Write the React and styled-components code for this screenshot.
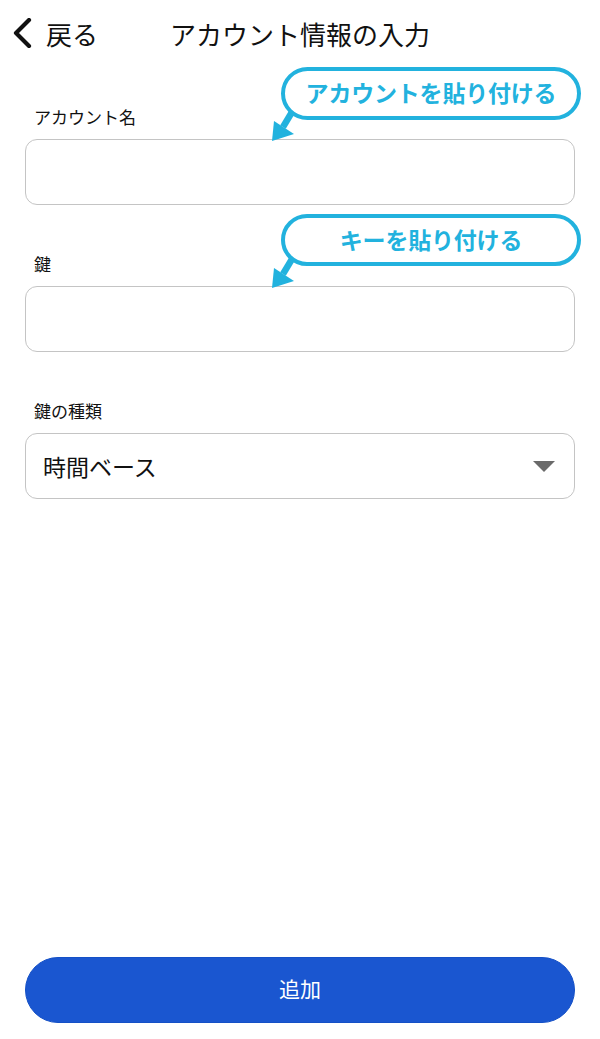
import React from 'react'
import styled, { createGlobalStyle } from 'styled-components'

const GlobalStyle = createGlobalStyle`
    html, body {
        margin: 0;
        padding: 0;
        background: #ffffff;
    }
    body {
        font-family: "Noto Sans CJK JP", "Noto Sans", sans-serif;
        color: #111111;
    }
`

const Page = styled.div`
    min-height: 100vh;
    display: flex;
    flex-direction: column;
    box-sizing: border-box;
    padding-bottom: 16px;
`

const Header = styled.header`
    height: 66px;
    display: grid;
    grid-template-columns: 1fr auto 1fr;
    align-items: center;
`

const BackButton = styled.button`
    display: flex;
    align-items: center;
    gap: 13px;
    padding: 0 0 0 13px;
    border: none;
    background: none;
    font-family: inherit;
    font-size: 26px;
    color: #111111;
    justify-self: start;
    cursor: pointer;
`

const Title = styled.h1`
    margin: 0;
    font-size: 26px;
    font-weight: 400;
    color: #111111;
`

const Form = styled.div`
    display: flex;
    flex-direction: column;
    gap: 50px;
    padding: 42px 25px 0;
`

const Field = styled.div`
    position: relative;
    display: flex;
    flex-direction: column;
    gap: 13px;
`

const Label = styled.label`
    font-size: 17px;
    line-height: 18px;
    padding-left: 9px;
    color: #111111;
`

const Box = styled.div`
    height: 66px;
    box-sizing: border-box;
    border: 1.6px solid #c4c4c4;
    border-radius: 12px;
    background: #ffffff;
    display: flex;
    align-items: center;
    justify-content: space-between;
    padding: 0 19px 0 17px;
    font-size: 23px;
    color: #111111;
`

const Caret = styled.span`
    width: 0;
    height: 0;
    border-left: 11px solid transparent;
    border-right: 11px solid transparent;
    border-top: 11px solid #6a6a6a;
`

const Callout = styled.div`
    position: absolute;
    top: -41px;
    left: 256px;
    width: 300px;
`

const Bubble = styled.div`
    position: relative;
    z-index: 1;
    height: ${p => p.h}px;
    box-sizing: border-box;
    border: 4px solid #22b2de;
    border-radius: 28px;
    background: #ffffff;
    display: flex;
    align-items: center;
    justify-content: center;
    padding-bottom: 3px;
    font-size: 23px;
    font-weight: 700;
    color: #22b2de;
    letter-spacing: -0.2px;
`

const Pointer = styled.svg`
    position: absolute;
    left: -14px;
    top: 38px;
    width: 40px;
    height: 40px;
    overflow: visible;
`

const AddButton = styled.button`
    margin: auto 25px 0;
    height: 66px;
    padding: 0 0 4px;
    border: 1px solid #1450c6;
    border-radius: 33px;
    background: #1a56d0;
    color: #ffffff;
    font-family: inherit;
    font-size: 21px;
    cursor: pointer;
`

const Chevron = () => (
    <svg width="20" height="30" viewBox="0 0 20 30">
        <path d="M16 2 L3 15 L16 28" fill="none" stroke="#111" strokeWidth="4.2" strokeLinecap="round" strokeLinejoin="round" />
    </svg>
)

const Hint = ({ text, h }) => (
    <Callout>
        <Pointer viewBox="0 0 40 40">
            <line x1="28" y1="2" x2="16" y2="22" stroke="#22b2de" strokeWidth="6.5" />
            <polygon points="5,36 27,29 7,16" fill="#22b2de" />
        </Pointer>
        <Bubble h={h}>{text}</Bubble>
    </Callout>
)

const App = () => {
    return (
        <Page>
            <GlobalStyle />
            <Header>
                <BackButton>
                    <Chevron />
                    戻る
                </BackButton>
                <Title>アカウント情報の入力</Title>
                <span />
            </Header>
            <Form>
                <Field>
                    <Label>アカウント名</Label>
                    <Box />
                    <Hint text="アカウントを貼り付ける" h={53} />
                </Field>
                <Field>
                    <Label>鍵</Label>
                    <Box />
                    <Hint text="キーを貼り付ける" h={52} />
                </Field>
                <Field>
                    <Label>鍵の種類</Label>
                    <Box>
                        時間ベース
                        <Caret />
                    </Box>
                </Field>
            </Form>
            <AddButton>追加</AddButton>
        </Page>
    )
}

export default App
